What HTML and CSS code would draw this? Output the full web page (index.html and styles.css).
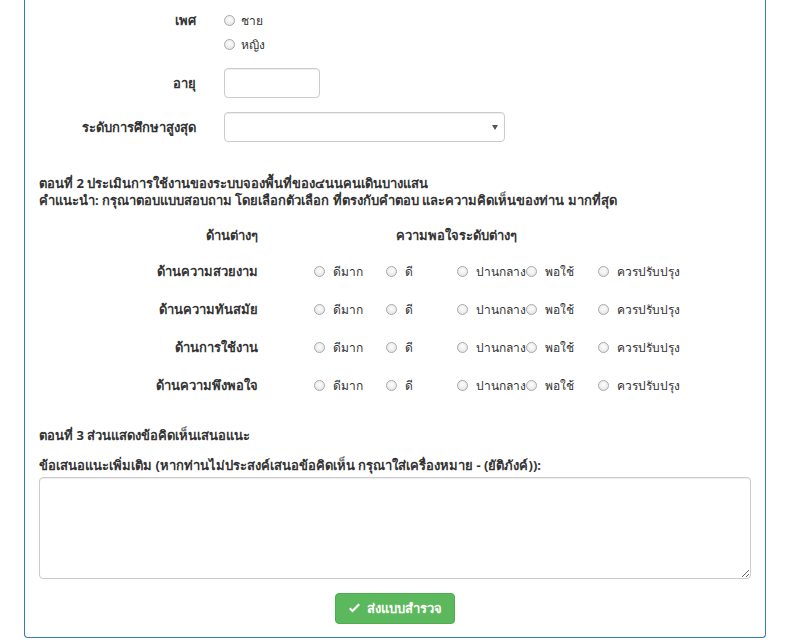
FILE: index.html
```html
<!DOCTYPE html>
<html lang="th">
<head>
<meta charset="utf-8">
<title>แบบสำรวจ</title>
<link rel="stylesheet" href="styles.css">
</head>
<body>
<div class="panel">
  <form class="panel-body">
    <div class="form-group gender">
      <label class="ctl-label">เพศ</label>
      <div class="controls">
        <label class="radio"><input type="radio" name="sex"><span>ชาย</span></label>
        <label class="radio"><input type="radio" name="sex"><span>หญิง</span></label>
      </div>
    </div>
    <div class="form-group age">
      <label class="ctl-label">อายุ</label>
      <div class="controls"><input class="text-input age-input" type="text"></div>
    </div>
    <div class="form-group edu">
      <label class="ctl-label">ระดับการศึกษาสูงสุด</label>
      <div class="controls"><span class="select-wrap"><select class="select"><option></option></select></span></div>
    </div>

    <div class="section-title">
      <div>ตอนที่ 2 ประเมินการใช้งานของระบบจองพื้นที่ของ๔นนคนเดินบางแสน</div>
      <div>คำแนะนำ: กรุณาตอบแบบสอบถาม โดยเลือกตัวเลือก ที่ตรงกับคำตอบ และความคิดเห็นของท่าน มากที่สุด</div>
    </div>

    <div class="rating">
      <div class="rating-head">
        <div class="rh-label">ด้านต่างๆ</div>
        <div class="rh-levels">ความพอใจระดับต่างๆ</div>
      </div>
      <div class="rating-row">
        <div class="r-label">ด้านความสวยงาม</div>
        <div class="opts">
          <label class="opt w1"><input type="radio" name="a"><span>ดีมาก</span></label>
          <label class="opt w2"><input type="radio" name="a"><span>ดี</span></label>
          <label class="opt w3"><input type="radio" name="a"><span>ปานกลาง</span></label>
          <label class="opt w4"><input type="radio" name="a"><span>พอใช้</span></label>
          <label class="opt"><input type="radio" name="a"><span>ควรปรับปรุง</span></label>
        </div>
      </div>
      <div class="rating-row">
        <div class="r-label">ด้านความทันสมัย</div>
        <div class="opts">
          <label class="opt w1"><input type="radio" name="b"><span>ดีมาก</span></label>
          <label class="opt w2"><input type="radio" name="b"><span>ดี</span></label>
          <label class="opt w3"><input type="radio" name="b"><span>ปานกลาง</span></label>
          <label class="opt w4"><input type="radio" name="b"><span>พอใช้</span></label>
          <label class="opt"><input type="radio" name="b"><span>ควรปรับปรุง</span></label>
        </div>
      </div>
      <div class="rating-row">
        <div class="r-label">ด้านการใช้งาน</div>
        <div class="opts">
          <label class="opt w1"><input type="radio" name="c"><span>ดีมาก</span></label>
          <label class="opt w2"><input type="radio" name="c"><span>ดี</span></label>
          <label class="opt w3"><input type="radio" name="c"><span>ปานกลาง</span></label>
          <label class="opt w4"><input type="radio" name="c"><span>พอใช้</span></label>
          <label class="opt"><input type="radio" name="c"><span>ควรปรับปรุง</span></label>
        </div>
      </div>
      <div class="rating-row">
        <div class="r-label">ด้านความพึงพอใจ</div>
        <div class="opts">
          <label class="opt w1"><input type="radio" name="d"><span>ดีมาก</span></label>
          <label class="opt w2"><input type="radio" name="d"><span>ดี</span></label>
          <label class="opt w3"><input type="radio" name="d"><span>ปานกลาง</span></label>
          <label class="opt w4"><input type="radio" name="d"><span>พอใช้</span></label>
          <label class="opt"><input type="radio" name="d"><span>ควรปรับปรุง</span></label>
        </div>
      </div>
    </div>

    <div class="section3">ตอนที่ 3 ส่วนแสดงข้อคิดเห็นเสนอแนะ</div>
    <label class="comment-label">ข้อเสนอแนะเพิ่มเติม (หากท่านไม่ประสงค์เสนอข้อคิดเห็น กรุณาใส่เครื่องหมาย - (ยัติภังค์)):</label>
    <textarea class="comment"></textarea>

    <div class="actions">
      <button type="button" class="btn-success">
        <svg class="check" viewBox="0 0 14 12" width="13" height="11"><path d="M1 6.5 L4.8 10.3 L13 2.2 L11.2 0.6 L4.8 7 L2.7 4.9 Z" fill="#fff"/></svg>
        <span>ส่งแบบสำรวจ</span>
      </button>
    </div>
  </form>
</div>
</body>
</html>
```

FILE: styles.css
```css
* { box-sizing: border-box; }

html, body {
  margin: 0;
  padding: 0;
  background: #fff;
}

body {
  font-family: "Noto Sans", "Open Sans", sans-serif;
  font-size: 13px;
  line-height: 17px;
  color: #333;
}

.panel {
  margin-left: 24px;
  width: 742px;
  border: 1px solid #337ab7;
  border-top: none;
  border-radius: 0 0 4px 4px;
}

.panel-body {
  display: block;
  padding: 8px 14px 13px 14px;
}

.form-group {
  display: grid;
  grid-template-columns: 157px 1fr;
  column-gap: 28px;
  align-items: center;
}

.ctl-label {
  font-weight: bold;
  text-align: right;
}

.gender { align-items: start; }
.gender .ctl-label { line-height: 24px; }

.controls { display: flex; flex-direction: column; }

.radio {
  display: flex;
  align-items: center;
  height: 24px;
  font-size: 12px;
}

input[type="radio"] {
  -webkit-appearance: none;
  appearance: none;
  width: 11px;
  height: 11px;
  margin: 0;
  border: 1px solid #a9a9a9;
  border-radius: 50%;
  background: radial-gradient(circle at 50% 40%, #fdfdfd 0%, #ececec 60%, #d9d9d9 100%);
  flex: none;
}

.radio input { margin-left: 0; margin-right: 6px; }

.age { margin-top: 12px; }
.edu { margin-top: 14px; }

.text-input, .select {
  height: 30px;
  border: 1px solid #ccc;
  border-radius: 4px;
  background: #fff;
  box-shadow: inset 0 1px 1px rgba(0,0,0,.075);
  font: inherit;
}

.age-input { width: 96px; }

.select-wrap {
  position: relative;
  display: inline-block;
  width: 281px;
}
.select {
  -webkit-appearance: none;
  appearance: none;
  width: 100%;
}
.select-wrap::after {
  content: "";
  position: absolute;
  right: 7px;
  top: 13px;
  border-left: 3px solid transparent;
  border-right: 3px solid transparent;
  border-top: 5px solid #555;
}

.section-title {
  margin-top: 33px;
  font-weight: bold;
}

.rating { margin-top: 18px; }

.rating-head {
  display: grid;
  grid-template-columns: 219px 1fr;
  font-weight: bold;
}
.rh-label { text-align: right; }
.rh-levels { padding-left: 138px; }

.rating-head + .rating-row { margin-top: 8px; }

.rating-row {
  display: grid;
  grid-template-columns: 219px 1fr;
  column-gap: 56px;
  align-items: center;
  height: 38px;
}

.r-label {
  text-align: right;
  font-weight: bold;
}

.opts { display: flex; align-items: center; font-size: 12px; }

.opt {
  display: flex;
  align-items: center;
  white-space: nowrap;
  flex: none;
}
.opt input { margin-right: 8px; }
.w1 { width: 72px; }
.w2 { width: 71px; }
.w3 { width: 69px; }
.w4 { width: 72px; }

.section3 {
  margin-top: 23px;
  font-weight: bold;
}

.comment-label {
  display: block;
  margin-top: 13px;
  font-weight: bold;
}

.comment {
  display: block;
  width: 100%;
  height: 102px;
  margin-top: 3px;
  border: 1px solid #ccc;
  border-radius: 4px;
  box-shadow: inset 0 1px 1px rgba(0,0,0,.075);
  font: inherit;
  resize: vertical;
}

.actions {
  display: flex;
  justify-content: center;
  margin-top: 14px;
}

.btn-success {
  display: flex;
  align-items: center;
  gap: 6px;
  height: 31px;
  width: 120px;
  justify-content: center;
  background: #5cb85c;
  border: 1px solid #4cae4c;
  border-radius: 4px;
  color: #fff;
  font: inherit;
  font-weight: bold;
  font-size: 13px;
}

.check { display: block; }
```
